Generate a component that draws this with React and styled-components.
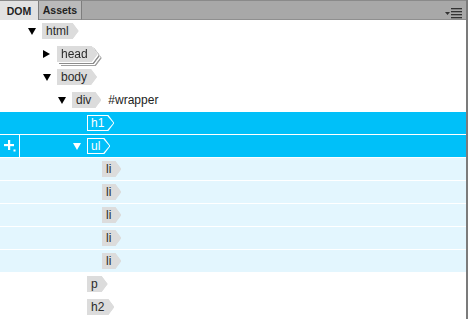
import React from "react";
import styled, { createGlobalStyle, css } from "styled-components";

const Global = createGlobalStyle`
  html, body { margin: 0; padding: 0; background: #fff; }
  body { font-family: "Liberation Sans", Arial, sans-serif; }
`;

const SEL = "#00c0f9";
const LIGHT = "#e3f6fe";

const Panel = styled.div`
  width: 468px;
  height: 319px;
  box-sizing: border-box;
  border-right: 2px solid #7b7b7b;
  background: #fff;
  overflow: hidden;
  display: flex;
  flex-direction: column;
`;

const TabBar = styled.div`
  height: 20px;
  flex: none;
  display: flex;
  align-items: stretch;
  background: #a8a8a8;
  border-top: 1px solid #8a8a8a;
  box-sizing: border-box;
  position: relative;
`;

const Tab = styled.div`
  display: flex;
  align-items: center;
  justify-content: center;
  font-size: 10.5px;
  font-weight: bold;
  color: #222;
  border-right: 1px solid #7d7d7d;
  background: ${(p) => (p.$active ? "#e2e2e2" : "#bababa")};
  ${(p) => !p.$active && css`border-bottom: 1px solid #8f8f8f;`}
  width: ${(p) => p.$w}px;
  box-sizing: border-box;
`;

const Spacer = styled.div`
  flex: 1;
  border-bottom: 1px solid #8f8f8f;
`;

const MenuBtn = styled.div`
  position: absolute;
  right: 3px;
  top: 4px;
`;

const Tree = styled.div`
  display: flex;
  flex-direction: column;
`;

const Row = styled.div`
  height: 23px;
  box-sizing: border-box;
  display: flex;
  align-items: stretch;
  border-bottom: 1px solid #fff;
  background: ${(p) => (p.$sel ? SEL : p.$light ? LIGHT : "#fff")};
`;

const Gutter = styled.div`
  width: 20px;
  flex: none;
  display: flex;
  align-items: center;
  justify-content: center;
  box-sizing: border-box;
  ${(p) => p.$line && css`border-right: 1px solid #fff;`}
`;

const Content = styled.div`
  display: flex;
  align-items: center;
  padding-left: ${(p) => 8 + p.$level * 15}px;
`;

const Toggle = styled.div`
  width: 14px;
  flex: none;
  display: flex;
  align-items: center;
`;

const TagWrap = styled.div`
  display: inline-flex;
  ${(p) =>
    p.$stack &&
    css`
      filter: drop-shadow(1px 1px 0 #fff) drop-shadow(1px 1px 0 #8c8c8c)
        drop-shadow(1px 1px 0 #fff) drop-shadow(1px 1px 0 #a0a0a0);
    `}
`;

const shape = `polygon(0 0, calc(100% - 6px) 0, 100% 50%, calc(100% - 6px) 100%, 0 100%)`;

const TagOuter = styled.div`
  height: 16px;
  clip-path: ${shape};
  background: ${(p) => (p.$sel ? "#fff" : "#dcdcdc")};
  padding: ${(p) => (p.$sel ? "1px" : "0")};
  box-sizing: border-box;
  display: flex;
`;

const TagInner = styled.div`
  flex: 1;
  display: flex;
  align-items: center;
  clip-path: ${shape};
  background: ${(p) => (p.$sel ? SEL : "#dcdcdc")};
  color: ${(p) => (p.$sel ? "#fff" : "#2a2a2a")};
  font-size: 12px;
  line-height: 14px;
  padding: ${(p) => (p.$sel ? "0 9px 0 3px" : "0 10px 0 4px")};
  white-space: nowrap;
`;

const Attr = styled.span`
  margin-left: 7px;
  font-size: 12px;
  color: #222;
`;

const Tri = ({ open, color = "#000" }) =>
  open ? (
    <svg width="8" height="7" viewBox="0 0 8 7">
      <polygon points="0,0 8,0 4,7" fill={color} />
    </svg>
  ) : (
    <svg width="7" height="8" viewBox="0 0 7 8">
      <polygon points="0,0 7,4 0,8" fill={color} />
    </svg>
  );

const Plus = () => (
  <svg width="12" height="12" viewBox="0 0 12 12">
    <rect x="4" y="0" width="2.2" height="10" fill="#fff" />
    <rect x="0" y="4" width="10" height="2.2" fill="#fff" />
    <rect x="9.5" y="9.5" width="2" height="2" fill="#fff" />
  </svg>
);

const Menu = () => (
  <svg width="18" height="11" viewBox="0 0 18 11">
    <polygon points="0,4 5,4 2.5,7" fill="#333" />
    <rect x="6" y="0" width="11" height="1.3" fill="#333" />
    <rect x="6" y="3" width="11" height="1.3" fill="#333" />
    <rect x="6" y="6" width="11" height="1.3" fill="#333" />
    <rect x="6" y="9" width="11" height="1.3" fill="#333" />
  </svg>
);

const nodes = [
  { tag: "html", level: 0, open: true },
  { tag: "head", level: 1, open: false, stack: true },
  { tag: "body", level: 1, open: true },
  { tag: "div", level: 2, open: true, attr: "#wrapper" },
  { tag: "h1", level: 3, sel: true },
  { tag: "ul", level: 3, open: true, sel: true, current: true },
  { tag: "li", level: 4, light: true },
  { tag: "li", level: 4, light: true },
  { tag: "li", level: 4, light: true },
  { tag: "li", level: 4, light: true },
  { tag: "li", level: 4, light: true },
  { tag: "p", level: 3 },
  { tag: "h2", level: 3 },
];

export default function App() {
  return (
    <>
      <Global />
      <Panel>
        <TabBar>
          <Tab $active $w={39}>DOM</Tab>
          <Tab $w={43}>Assets</Tab>
          <Spacer />
          <MenuBtn>
            <Menu />
          </MenuBtn>
        </TabBar>
        <Tree>
          {nodes.map((n, i) => (
            <Row key={i} $sel={n.sel} $light={n.light}>
              <Gutter $line={n.current}>{n.current && <Plus />}</Gutter>
              <Content $level={n.level}>
                <Toggle>
                  {n.open !== undefined && (
                    <Tri open={n.open} color={n.sel ? "#fff" : "#000"} />
                  )}
                </Toggle>
                <TagWrap $stack={n.stack}>
                  <TagOuter $sel={n.sel}>
                    <TagInner $sel={n.sel}>{n.tag}</TagInner>
                  </TagOuter>
                </TagWrap>
                {n.attr && <Attr>{n.attr}</Attr>}
              </Content>
            </Row>
          ))}
        </Tree>
      </Panel>
    </>
  );
}
